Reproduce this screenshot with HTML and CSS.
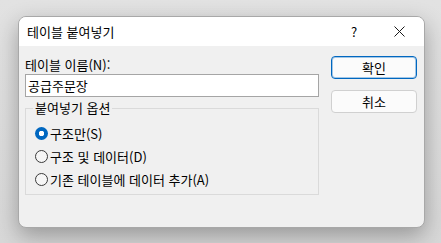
FILE: index.html
```html
<!DOCTYPE html>
<html lang="ko">
<head>
    <meta charset="UTF-8">
    <title>테이블 붙여넣기</title>
    <link rel="stylesheet" href="styles.css">
</head>
<body>
    <div class="dialog">
        <div class="titlebar">
            <span class="title">테이블 붙여넣기</span>
            <span class="help">?</span>
            <span class="close">
                <svg width="11" height="11" viewBox="0 0 11 11">
                    <path d="M0.5 0.5 L10.5 10.5 M10.5 0.5 L0.5 10.5" stroke="#1a1a1a" stroke-width="1" fill="none"/>
                </svg>
            </span>
        </div>

        <div class="content">
            <div class="main-col">
                <label class="field-label" for="tableName">테이블 이름(N):</label>
                <input type="text" id="tableName" class="text-input" value="공급주문장">

                <fieldset class="group">
                    <legend>붙여넣기 옵션</legend>
                    <label class="radio-row">
                        <input type="radio" name="paste" checked>
                        <span>구조만(S)</span>
                    </label>
                    <label class="radio-row">
                        <input type="radio" name="paste">
                        <span>구조 및 데이터(D)</span>
                    </label>
                    <label class="radio-row">
                        <input type="radio" name="paste">
                        <span>기존 테이블에 데이터 추가(A)</span>
                    </label>
                </fieldset>
            </div>

            <div class="btn-col">
                <button class="btn btn-default">확인</button>
                <button class="btn">취소</button>
            </div>
        </div>
    </div>
</body>
</html>
```

FILE: styles.css
```css
body {
    margin: 0;
    padding: 16px 0 0 18px;
    height: 243px;
    box-sizing: border-box;
    overflow: hidden;
    background: linear-gradient(180deg, #e2e2e2 0%, #d8d8d8 100%);
    font-family: "Noto Sans CJK KR", "Noto Sans", sans-serif;
    font-size: 13px;
    color: #000;
}
.dialog {
    width: 407px;
    height: 212px;
    box-sizing: border-box;
    border: 1px solid #a8a8a8;
    border-radius: 8px;
    background: #f0f0f0;
    box-shadow: 0 8px 22px rgba(0,0,0,0.3);
    overflow: hidden;
    display: flex;
    flex-direction: column;
}
.titlebar {
    height: 29px;
    background: #fff;
    display: flex;
    align-items: center;
    padding-left: 8px;
}
.title {
    flex: 1;
    line-height: 16px;
    padding-top: 1px;
}
.help {
    width: 14px;
    text-align: center;
    margin-right: 33px;
}
.close {
    display: flex;
    margin-right: 19px;
}
.content {
    flex: 1;
    display: flex;
    gap: 12px;
    padding: 10px 0 0 6px;
}
.main-col {
    width: 294px;
    display: flex;
    flex-direction: column;
}
.field-label {
    line-height: 18px;
}
.text-input {
    height: 23px;
    box-sizing: border-box;
    margin: 0;
    border: 1px solid #a5a5a5;
    background: #fff;
    padding: 0 2px;
    font-family: inherit;
    font-size: 13px;
    color: #000;
    outline: none;
}
.group {
    margin: 3px 0 0;
    padding: 0 0 3px 9px;
    border: 1px solid #dadada;
    min-width: 0;
}
.group legend {
    padding: 0 2px;
    margin-left: -2px;
    line-height: 16px;
}
.radio-row {
    height: 23px;
    display: flex;
    align-items: center;
    gap: 2px;
}
.radio-row:first-of-type {
    margin-top: 6px;
}
.radio-row input {
    appearance: none;
    margin: 0;
    width: 13px;
    height: 13px;
    border-radius: 50%;
    border: 1px solid #3a3a3a;
    background: #f6f6f6;
    box-sizing: border-box;
}
.radio-row input:checked {
    border: none;
    background: radial-gradient(circle, #fff 0 2.5px, #0067c0 3px);
}
.btn-col {
    width: 86px;
    display: flex;
    flex-direction: column;
    gap: 11px;
}
.btn {
    height: 23px;
    margin: 0;
    border: 1px solid #d0d0d0;
    border-radius: 4px;
    background: #fbfbfb;
    font-family: inherit;
    font-size: 13px;
    color: #000;
    padding: 0;
}
.btn-default {
    border-color: #0067c0;
    box-shadow: inset 0 0 0 1px rgba(0,103,192,0.35);
}
```
